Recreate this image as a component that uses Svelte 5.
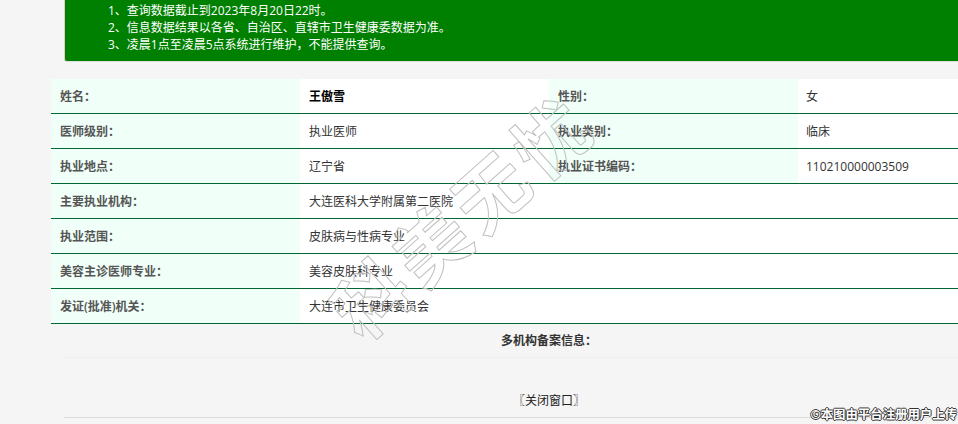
<script>
	const rows = [
		{ label: "姓名：", value: "王傲雪", strong: true, label2: "性别：", value2: "女" },
		{ label: "医师级别：", value: "执业医师", label2: "执业类别：", value2: "临床" },
		{ label: "执业地点：", value: "辽宁省", label2: "执业证书编码：", value2: "110210000003509" },
		{ label: "主要执业机构：", value: "大连医科大学附属第二医院" },
		{ label: "执业范围：", value: "皮肤病与性病专业" },
		{ label: "美容主诊医师专业：", value: "美容皮肤科专业" },
		{ label: "发证(批准)机关：", value: "大连市卫生健康委员会" }
	];

	const notes = [
		"1、查询数据截止到2023年8月20日22时。",
		"2、信息数据结果以各省、自治区、直辖市卫生健康委数据为准。",
		"3、凌晨1点至凌晨5点系统进行维护，不能提供查询。"
	];
</script>

<div class="page">
	<div class="notice">
		{#each notes as note}
			<p>{note}</p>
		{/each}
	</div>

	<table class="info">
		<tbody>
			{#each rows as row}
				<tr>
					<th>{row.label}</th>
					{#if row.label2}
						<td class:strong={row.strong}>{row.value}</td>
						<th>{row.label2}</th>
						<td class="last">{row.value2}</td>
					{:else}
						<td colspan="3">{row.value}</td>
					{/if}
				</tr>
			{/each}
		</tbody>
	</table>

	<div class="footer">
		<div class="section-title">多机构备案信息：</div>
		<div class="close">〖关闭窗口〗</div>
	</div>

	<div class="watermark">科美无忧</div>
	<div class="credit">©本图由平台注册用户上传</div>
</div>

<style>
	:global(body) {
		margin: 0;
		background: #f5f5f5;
		overflow: hidden;
	}

	.page {
		position: relative;
		width: 958px;
		height: 424px;
		overflow: hidden;
		font-family: "Open Sans", "Noto Sans CJK SC", sans-serif;
		font-size: 12px;
		color: #333;
	}

	.notice {
		box-sizing: border-box;
		width: 970px;
		height: 62px;
		margin-left: 64px;
		padding: 2px 0 0 43px;
		background: #008000;
		border-left: 1px solid #e8c8c8;
		border-bottom: 1px solid #d8e0d8;
		border-bottom-left-radius: 3px;
		color: #fff;
		line-height: 17px;
	}

	.notice p {
		margin: 0;
	}

	.info {
		width: 996px;
		margin: 17px 0 0 51px;
		border-collapse: separate;
		border-spacing: 0;
		table-layout: fixed;
		background: #fff;
	}

	.info th,
	.info td {
		height: 34px;
		padding: 0 9px;
		border-bottom: 1px solid #006633;
		text-align: left;
	}

	.info th {
		width: 231px;
		background: #f0fff8;
		color: #555;
		font-weight: 600;
	}

	.info td.strong {
		color: #000;
		font-weight: 700;
	}

	.info td.last {
		padding-left: 8px;
	}

	.footer {
		width: 970px;
		margin-left: 64px;
		text-align: center;
	}

	.section-title {
		height: 33px;
		line-height: 34px;
		border-bottom: 1px solid #eee;
		font-weight: 700;
	}

	.close {
		height: 59px;
		line-height: 85px;
		border-bottom: 1px solid #ddd;
		color: #222;
	}

	.watermark {
		position: absolute;
		left: 463px;
		top: 216px;
		transform: translate(-50%, -50%) rotate(-41.7deg);
		font-size: 73px;
		line-height: 1;
		letter-spacing: 7px;
		font-weight: 700;
		white-space: nowrap;
		color: transparent;
		-webkit-text-stroke: 1px #c0c0c0;
		pointer-events: none;
	}

	.credit {
		position: absolute;
		right: 1px;
		bottom: 2px;
		font-size: 12.4px;
		line-height: 14px;
		font-weight: 700;
		color: #fff;
		text-shadow: 1px 0 0 #333, -1px 0 0 #333, 0 1px 0 #333, 0 -1px 0 #333;
	}
</style>
